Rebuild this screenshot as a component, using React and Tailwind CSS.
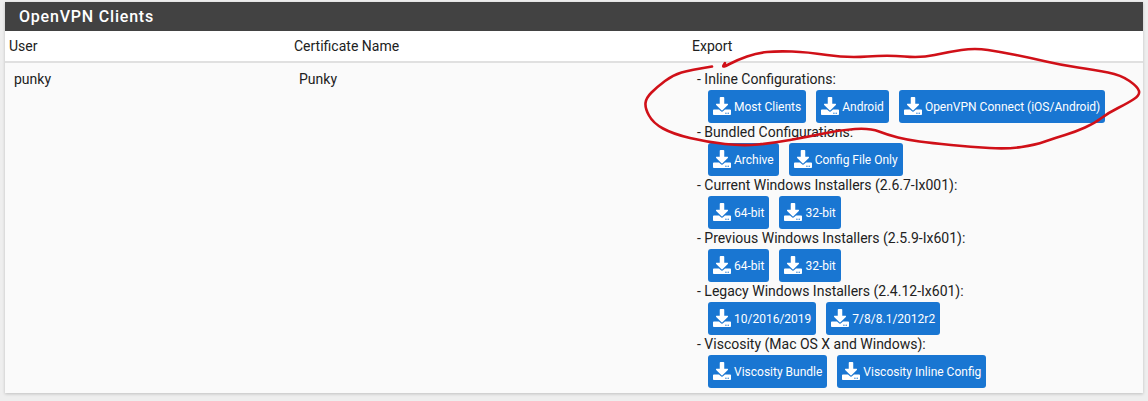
import React from 'react';
import { FaDownload } from 'react-icons/fa';

const groups = [
  { title: '- Inline Configurations:', buttons: ['Most Clients', 'Android', 'OpenVPN Connect (iOS/Android)'] },
  { title: '- Bundled Configurations:', buttons: ['Archive', 'Config File Only'] },
  { title: '- Current Windows Installers (2.6.7-Ix001):', buttons: ['64-bit', '32-bit'] },
  { title: '- Previous Windows Installers (2.5.9-Ix601):', buttons: ['64-bit', '32-bit'] },
  { title: '- Legacy Windows Installers (2.4.12-Ix601):', buttons: ['10/2016/2019', '7/8/8.1/2012r2'] },
  { title: '- Viscosity (Mac OS X and Windows):', buttons: ['Viscosity Bundle', 'Viscosity Inline Config'] },
];

// pen stroke, traced from the picture
const penPoints = [
  [712, 66.5], [690, 70], [673, 75], [657, 87], [646, 98], [645, 108], [653, 123], [673, 134],
  [707, 142], [743, 146], [773, 143], [807, 137], [840, 130], [870, 128], [888, 135], [908, 140],
  [931, 143], [971, 147], [1008, 149], [1035, 145], [1055, 138], [1075, 132], [1095, 123], [1108, 113],
  [1128, 103], [1140, 95], [1138, 87], [1121, 75], [1095, 70], [1061, 65], [1031, 58], [1001, 52],
  [975, 48], [948, 52], [921, 58], [888, 55], [847, 58], [807, 52], [777, 51], [757, 53],
  [737, 60], [722, 68], [725, 63],
];

const smoothPath = (pts) => {
  let d = `M${pts[0][0]} ${pts[0][1]}`;
  for (let i = 1; i < pts.length - 1; i++) {
    const mx = (pts[i][0] + pts[i + 1][0]) / 2;
    const my = (pts[i][1] + pts[i + 1][1]) / 2;
    d += `Q${pts[i][0]} ${pts[i][1]} ${mx} ${my}`;
  }
  const last = pts[pts.length - 1];
  return `${d}L${last[0]} ${last[1]}`;
};

const ExportButton = ({ label }) => (
  <a className="flex h-[33px] items-center gap-[3px] rounded-[3px] bg-[#1976d2] pl-[5px] pr-[5px] text-[12px] text-white">
    <FaDownload className="h-[18px] w-[18px] -translate-y-[1px]" />
    <span>{label}</span>
  </a>
);

const App = () => {
  return (
    <div className="relative h-[401px] w-[1148px] overflow-hidden bg-[#eeeeee] pl-[5px] pr-[5px] pt-[2px] font-['Roboto',sans-serif] text-[14px] text-[#212121]">
      <div className="h-[391px] bg-[#fafafa] shadow-[0_1px_3px_rgba(0,0,0,0.2)]">
        {/* Panel heading */}
        <div className="flex h-[29px] items-center bg-[#424242] pl-[14px]">
          <h2 className="text-[16px] font-medium tracking-[0.8px] text-white">OpenVPN Clients</h2>
        </div>

        {/* Table header */}
        <div className="flex h-[32px] items-center border-b-2 border-[#e0e0e0] bg-white pl-[4px]">
          <div className="w-[285px]">User</div>
          <div className="w-[398px]">Certificate Name</div>
          <div>Export</div>
        </div>

        {/* Client row */}
        <div className="flex pl-[9px] pt-[6px]">
          <div className="w-[285px] leading-[20px]">punky</div>
          <div className="w-[398px] leading-[20px]">Punky</div>
          <div className="flex flex-col">
            {groups.map((group) => (
              <div key={group.title} className="h-[53px]">
                <div className="h-[21px] leading-[20px]">{group.title}</div>
                <div className="flex gap-[10px] pl-[11px]">
                  {group.buttons.map((label) => (
                    <ExportButton key={label} label={label} />
                  ))}
                </div>
              </div>
            ))}
          </div>
        </div>
      </div>

      {/* Red pen annotation */}
      <svg className="pointer-events-none absolute left-0 top-0" width="1148" height="401" fill="none">
        <path
          d={smoothPath(penPoints)}
          stroke="#d01018"
          strokeWidth="2.6"
          strokeLinecap="round"
          strokeLinejoin="round"
        />
      </svg>
    </div>
  );
};

export default App;
